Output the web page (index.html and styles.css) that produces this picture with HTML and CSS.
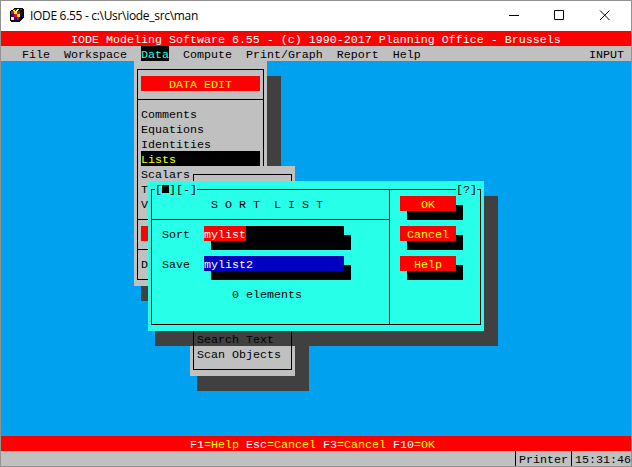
FILE: index.html
```
<!DOCTYPE html>
<html lang="en">
<head>
<meta charset="utf-8">
<title>IODE 6.55</title>
<link rel="stylesheet" href="styles.css">
</head>
<body>
<div class="app">
  <header class="titlebar">
    <svg class="logo" width="14" height="14" viewBox="0 0 14 14" shape-rendering="crispEdges">
      <path fill="#000" d="M4 0h9v1h1v9h-1v1h-1v1h-1v1h-1v1H1v-1H0V3h1V2h2V1h1z"/>
      <path fill="#f00" d="M1 3h3v3H1zM7 3h3v3H7zM4 6h3v3H4zM7 9h2v3H7zM10 1h2v1h-2zM4 1h2v1H4z"/>
      <path fill="#ff0" d="M4 3h3v3H4zM7 6h3v3H7zM1 9h3v3H1zM7 1h2v1H7zM3 2h2v1H3z"/>
      <path fill="#0010e8" d="M1 6h3v3H1zM4 9h3v3H4zM11 4h1v3h-1zM12 7h1v2h-1z"/>
      <path fill="#fff" d="M6 2h2v1H6z"/>
    </svg>
    <span class="caption">IODE 6.55 - c:\Usr\iode_src\man</span>
    <svg class="controls" width="102" height="12" viewBox="0 0 102 12" fill="none" stroke="#000">
      <path d="M0 6.500h10M45.500 1.500h9v9h-9z"/>
      <path d="M91 1.500l9.500 9.500M100.500 1.500L91 11"/>
    </svg>
  </header>
  <div class="banner">IODE Modeling Software 6.55 - (c) 1990-2017 Planning Office - Brussels</div>
  <nav class="menubar">
    <span>File</span><span>Workspace</span><span class="active">Data</span><span>Compute</span><span>Print/Graph</span><span>Report</span><span>Help</span><span class="mode">INPUT</span>
  </nav>
  <main class="desktop">
    <section class="window data-menu">
      <div class="frame">
        <div class="heading">DATA EDIT</div>
        <div class="rule"></div>
        <div>Comments</div>
        <div>Equations</div>
        <div>Identities</div>
        <div class="selected">Lists</div>
        <div>Scalars</div>
        <div>T</div>
        <div>V</div>
        <div class="rule"></div>
        <div class="band"></div>
        <div class="rule"></div>
        <div>D</div>
      </div>
    </section>
    <div class="dialog-shadow"></div>
    <section class="window sub-menu">
      <div class="frame">
        <div>Search Text</div>
        <div>Scan Objects</div>
      </div>
    </section>
    <section class="window dialog">
      <div class="frame">
        <div class="form">
          <h1>S O R T&nbsp; L I S T</h1>
          <div class="field"><label>Sort</label><div class="input"><span class="mark">mylist</span></div></div>
          <div class="field"><label>Save</label><div class="input blue">mylist2</div></div>
          <div class="count">0 elements</div>
        </div>
        <div class="actions">
          <button>OK</button>
          <button>Cancel</button>
          <button>Help</button>
        </div>
      </div>
      <span class="tag left">[<i></i>][-]</span>
      <span class="tag right">[?]</span>
    </section>
  </main>
  <div class="keys"><b>F1</b>=Help <b>Esc</b>=Cancel <b>F3</b>=Cancel <b>F10</b>=OK</div>
  <footer class="status"><span>Printer</span><span>15:31:46</span></footer>
</div>
</body>
</html>
```
FILE: styles.css
```
* { box-sizing: border-box; margin: 0; padding: 0; }
body { width: 632px; height: 467px; overflow: hidden; }
.app {
  width: 632px; height: 467px;
  border: 1px solid #939393;
  display: flex; flex-direction: column;
  font: 11.667px/19px "Liberation Mono", monospace;
  color: #000; white-space: nowrap;
}
.titlebar {
  height: 30px; background: #fff; display: flex; align-items: center;
  flex: none; padding: 0 20px 2px 9px;
}
.caption {
  font: 12px/16px "Open Sans", sans-serif; margin: 2px 0 0 6px; letter-spacing: -0.3px;
  transform: scaleX(0.998); transform-origin: left;
}
.controls { margin-left: auto; }
.banner, .menubar, .keys, .status { height: 15px; flex: none; }
.banner { background: #f00; color: #fff; padding-left: 70px; }
.menubar { background: #c0c0c0; display: flex; gap: 14px; padding: 0 7px 0 21px; }
.menubar .active { background: #000; color: #28ffe8; }
.menubar .mode { margin-left: auto; }
.desktop { flex: 1; background: #00a2f0; position: relative; overflow: hidden; }
.window { position: absolute; background: #c0c0c0; }
.data-menu {
  left: 133px; top: 0; width: 133px; height: 225px; padding: 8px 3px 6px;
  box-shadow: 7px 15px #404040, 14px 15px #404040;
}
.frame { border: 1px solid #000; height: 100%; }
.data-menu .frame { padding: 6px 3px; }
.data-menu .frame > div { height: 15px; }
.data-menu .heading { background: #f00; color: #ff0; text-align: center; }
.data-menu .selected { background: #000; color: #ff0; }
.data-menu .band { background: #f00; }
.rule { margin: 0 -3px; background: linear-gradient(#000, #000) 0 8px / 100% 1px no-repeat; }
.dialog-shadow { position: absolute; left: 154px; top: 135px; width: 343px; height: 150px; background: #404040; }
.sub-menu {
  left: 189px; top: 105px; width: 105px; height: 210px; padding: 8px 3px 6px;
  background: linear-gradient(#404040, #404040) 0 165px / 100% 15px no-repeat #c0c0c0;
  box-shadow: 7px 15px #404040, 14px 15px #404040;
}
.sub-menu .frame { padding: 156px 3px 0; }
.sub-menu .frame > div { height: 15px; }
.dialog { left: 147px; top: 120px; width: 336px; height: 150px; padding: 8px 3px 6px; background: #28ffe8; }
.dialog .frame { display: flex; }
.form { width: 238px; border-right: 1px solid #000; padding-top: 6px; flex: none; }
h1 {
  font: inherit; height: 30px; padding-left: 59px;
  background: linear-gradient(#000, #000) 0 23px / 100% 1px no-repeat;
}
.field { display: flex; height: 30px; padding-left: 10px; }
.field label { width: 42px; }
.input { width: 140px; height: 15px; background: #000; color: #fff; box-shadow: 7px 9px #000; }
.input .mark { background: #f00; display: block; width: 42px; height: 15px; }
.input.blue { background: #0000c0; }
.count { padding-left: 80px; }
.actions { padding: 6px 0 0 10px; display: flex; flex-direction: column; gap: 15px; }
button {
  border: 0; width: 56px; height: 15px; background: #f00; color: #ff0; font: inherit;
  display: flex; align-items: flex-start; justify-content: center; box-shadow: 7px 9px #000;
}
.tag { position: absolute; top: 0; height: 15px; background: #28ffe8; }
.tag.left { left: 7px; }
.tag.right { right: 7px; }
.tag i { display: inline-block; width: 7px; height: 8px; background: #000; vertical-align: 0; }
.keys { background: #f00; color: #ff0; padding-left: 189px; }
.keys b { font-weight: normal; color: #fff; }
.status { background: #c0c0c0; display: flex; justify-content: flex-end; overflow: hidden; }
.status span { height: 15px; padding-left: 3px; border-left: 1px solid #000; margin-left: 3px; }
```
